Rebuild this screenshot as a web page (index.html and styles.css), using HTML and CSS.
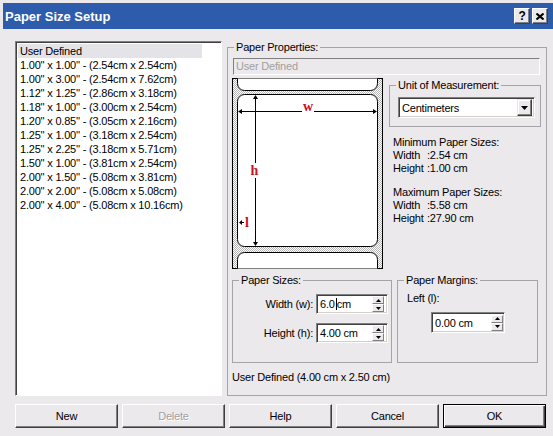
FILE: index.html
```html
<!DOCTYPE html>
<html>
<head>
<meta charset="utf-8">
<title>Paper Size Setup</title>
<link rel="stylesheet" href="styles.css">
</head>
<body>
<div class="window">
  <div class="titlebar">
    <span class="title">Paper Size Setup</span>
    <div class="tb-buttons">
      <span class="tb-btn">?</span>
      <span class="tb-btn"><svg width="8" height="7" viewBox="0 0 8 7"><path d="M0.5 0.5 L7.5 6.5 M7.5 0.5 L0.5 6.5" stroke="#000" stroke-width="2"/></svg></span>
    </div>
  </div>
  <div class="content">
    <div class="main">
      <div class="listbox">
        <div class="item selected">User Defined</div>
        <div class="item">1.00'' x 1.00'' - (2.54cm x 2.54cm)</div>
        <div class="item">1.00'' x 3.00'' - (2.54cm x 7.62cm)</div>
        <div class="item">1.12'' x 1.25'' - (2.86cm x 3.18cm)</div>
        <div class="item">1.18'' x 1.00'' - (3.00cm x 2.54cm)</div>
        <div class="item">1.20'' x 0.85'' - (3.05cm x 2.16cm)</div>
        <div class="item">1.25'' x 1.00'' - (3.18cm x 2.54cm)</div>
        <div class="item">1.25'' x 2.25'' - (3.18cm x 5.71cm)</div>
        <div class="item">1.50'' x 1.00'' - (3.81cm x 2.54cm)</div>
        <div class="item">2.00'' x 1.50'' - (5.08cm x 3.81cm)</div>
        <div class="item">2.00'' x 2.00'' - (5.08cm x 5.08cm)</div>
        <div class="item">2.00'' x 4.00'' - (5.08cm x 10.16cm)</div>
      </div>
      <fieldset class="group props">
        <legend>Paper Properties:</legend>
        <div class="props-body">
          <div class="textbox">User Defined</div>
          <div class="props-row">
            <svg class="preview" width="151" height="191" viewBox="0 0 151 191">
              <defs>
                <pattern id="dither" width="2" height="2" patternUnits="userSpaceOnUse">
                  <rect width="2" height="2" fill="#ffffff"/>
                  <rect width="1" height="1" fill="#b4b4b4"/>
                  <rect x="1" y="1" width="1" height="1" fill="#b4b4b4"/>
                </pattern>
              </defs>
              <rect x="0.5" y="0.5" width="150" height="190" fill="url(#dither)" stroke="#000"/>
              <path d="M5.5 0.5 V5.5 A7 7 0 0 0 12.5 12.5 H138.5 A7 7 0 0 0 145.5 5.5 V0.5" fill="#fff" stroke="#000"/>
              <rect x="5.5" y="16.5" width="140" height="152" rx="7" ry="7" fill="#fff" stroke="#000"/>
              <path d="M5.5 190.5 V181.5 A7 7 0 0 1 12.5 174.5 H138.5 A7 7 0 0 1 145.5 181.5 V190.5" fill="#fff" stroke="#000"/>
              <path d="M7 33.5 H70 M82 33.5 H144" stroke="#000"/>
              <path d="M6 33.5 L10 31 L10 36 Z M145 33.5 L141 31 L141 36 Z" fill="#000"/>
              <text x="76" y="33" class="dim" text-anchor="middle">w</text>
              <path d="M23.5 18 V85 M23.5 100 V167" stroke="#000"/>
              <path d="M23.5 17 L21 21 L26 21 Z M23.5 168 L21 164 L26 164 Z" fill="#000"/>
              <text x="22.5" y="97" class="dim" text-anchor="middle">h</text>
              <path d="M8 144.5 H12" stroke="#000"/>
              <path d="M7 144.5 L10 142 L10 147 Z" fill="#000"/>
              <text x="13" y="149" class="dim">l</text>
            </svg>
            <div class="side">
              <fieldset class="group unit">
                <legend>Unit of Measurement:</legend>
                <div class="combo">
                  <span class="combo-text">Centimeters</span>
                  <span class="combo-btn"><svg width="7" height="4" viewBox="0 0 7 4"><path d="M0 0 H7 L3.5 4 Z" fill="#000"/></svg></span>
                </div>
              </fieldset>
              <div class="limits first">
                <div>Minimum Paper Sizes:</div>
                <div><span class="lbl">Width</span>:2.54 cm</div>
                <div><span class="lbl">Height</span>:1.00 cm</div>
              </div>
              <div class="limits second">
                <div>Maximum Paper Sizes:</div>
                <div><span class="lbl">Width</span>:5.58 cm</div>
                <div><span class="lbl">Height</span>:27.90 cm</div>
              </div>
            </div>
          </div>
          <div class="bottom-row">
            <fieldset class="group sizes">
              <legend>Paper Sizes:</legend>
              <div class="sizes-grid">
                <span class="flabel">Width (w):</span>
                <div class="field"><span class="val">6.0</span><span class="caret"></span><span class="val">cm</span>
                  <span class="spin"><span class="sb"><svg width="5" height="3" viewBox="0 0 5 3"><path d="M2.5 0 L5 3 H0 Z" fill="#000"/></svg></span><span class="sb"><svg width="5" height="3" viewBox="0 0 5 3"><path d="M0 0 H5 L2.5 3 Z" fill="#000"/></svg></span></span>
                </div>
                <span class="flabel">Height (h):</span>
                <div class="field"><span class="val">4.00 cm</span>
                  <span class="spin"><span class="sb"><svg width="5" height="3" viewBox="0 0 5 3"><path d="M2.5 0 L5 3 H0 Z" fill="#000"/></svg></span><span class="sb"><svg width="5" height="3" viewBox="0 0 5 3"><path d="M0 0 H5 L2.5 3 Z" fill="#000"/></svg></span></span>
                </div>
              </div>
            </fieldset>
            <fieldset class="group margins">
              <legend>Paper Margins:</legend>
              <div class="margins-body">
                <div class="mlabel">Left (l):</div>
                <div class="field mfield"><span class="val">0.00 cm</span>
                  <span class="spin"><span class="sb"><svg width="5" height="3" viewBox="0 0 5 3"><path d="M2.5 0 L5 3 H0 Z" fill="#000"/></svg></span><span class="sb"><svg width="5" height="3" viewBox="0 0 5 3"><path d="M0 0 H5 L2.5 3 Z" fill="#000"/></svg></span></span>
                </div>
              </div>
            </fieldset>
          </div>
          <div class="summary">User Defined (4.00 cm x 2.50 cm)</div>
        </div>
      </fieldset>
    </div>
    <div class="buttons">
      <button class="btn">New</button>
      <button class="btn disabled">Delete</button>
      <button class="btn">Help</button>
      <button class="btn">Cancel</button>
      <button class="btn default">OK</button>
    </div>
  </div>
</div>
</body>
</html>
```
FILE: styles.css
```css
* { box-sizing: border-box; }
html, body { margin: 0; padding: 0; }
body {
  width: 553px;
  height: 436px;
  overflow: hidden;
  background: #ece9ec;
  font-family: "Liberation Sans", Arial, sans-serif;
  font-size: 11px;
  letter-spacing: -0.2px;
  color: #000;
}
.window { padding: 3px 0 0 3px; height: 436px; }
.titlebar {
  height: 26px;
  background: #2c5cab;
  display: flex;
  align-items: center;
  justify-content: space-between;
  padding: 0 5px 0 2px;
}
.title { color: #fff; font-weight: bold; font-size: 13px; letter-spacing: 0; }
.tb-buttons { display: flex; gap: 2px; }
.tb-btn {
  width: 16px; height: 16px;
  background: #ece9ec;
  border: 1px solid;
  border-color: #fff #404040 #404040 #fff;
  box-shadow: inset -1px -1px #808080;
  display: flex; align-items: center; justify-content: center;
  font-weight: bold; font-size: 12px; line-height: 12px;
}
.content { padding: 12px 0 0 12px; }
.main { display: flex; gap: 5px; height: 355px; }
.listbox {
  width: 207px; height: 355px;
  background: #fff;
  border: 1px solid;
  border-color: #808080 #fff #fff #808080;
  box-shadow: inset 1px 1px #404040;
  padding: 2px 0 0 2px;
}
.item { height: 14px; line-height: 14px; padding-left: 2px; white-space: nowrap; width: 184px; }
.item.selected { background: #e4e4e8; }

fieldset.group { margin: 0; padding: 0; border: 1px solid #a5a3a7; min-width: 0; }
fieldset.group > legend { margin-left: 6px; padding: 0 2px; line-height: 13px; height: 13px; }
.props { width: 320px; height: 355px; }
.props-body { padding: 4px 5px 0 4px; }
.textbox {
  margin-left: 1px;
  width: 307px; height: 17px;
  border: 1px solid;
  border-color: #808080 #fff #fff #808080;
  color: #a0a0a0;
  line-height: 15px;
  padding-left: 2px;
}
.props-row { display: flex; gap: 6px; margin-top: 3px; }
.preview { display: block; flex: none; }
.dim { font-family: "Liberation Serif", "Times New Roman", serif; font-weight: bold; font-size: 14px; fill: #cc1122; letter-spacing: 0; }
.side { width: 152px; padding-top: 1px; }
.unit { width: 152px; height: 48px; }
.unit .combo { margin: 5px 0 0 8px; }
.combo {
  width: 137px; height: 21px;
  background: #fff;
  border: 1px solid;
  border-color: #808080 #fff #fff #808080;
  box-shadow: inset 1px 1px #404040, inset -1px -1px #d4d0c8;
  display: flex; align-items: center;
  padding: 0 2px 0 2px;
}
.combo-text { padding-left: 1px; }
.combo-btn {
  margin-left: auto;
  width: 15px; height: 17px;
  background: #ece9ec;
  border: 1px solid;
  border-color: #e8e8e8 #404040 #404040 #e8e8e8;
  box-shadow: inset -1px -1px #808080, inset 1px 1px #fff;
  display: flex; align-items: center; justify-content: center;
}
.limits { padding-left: 4px; line-height: 13px; }
.limits.first { margin-top: 9px; }
.limits.second { margin-top: 11px; }
.lbl { display: inline-block; width: 34px; }
.bottom-row { display: flex; gap: 5px; margin-top: 5px; }
.sizes { width: 160px; height: 89px; }
.margins { width: 141px; height: 89px; }
.sizes-grid {
  display: grid;
  grid-template-columns: 1fr 72px;
  column-gap: 3px;
  row-gap: 9px;
  padding: 7px 3px 0 0;
}
.flabel { text-align: right; line-height: 20px; }
.field {
  display: flex; align-items: center;
  height: 20px;
  background: #fff;
  border: 1px solid;
  border-color: #808080 #fff #fff #808080;
  box-shadow: inset 1px 1px #404040, inset -1px -1px #d4d0c8;
  padding-left: 3px;
}
.caret { display: inline-block; width: 1px; height: 12px; background: #000; margin: 0 0 0 1px; }
.spin {
  margin-left: auto;
  margin-right: 3px;
  width: 12px; height: 16px;
  display: flex; flex-direction: column;
}
.sb {
  flex: 1;
  background: #ece9ec;
  border: 1px solid;
  border-color: #fff #808080 #808080 #fff;
  display: flex; align-items: center; justify-content: center;
}
.margins-body { padding: 5px 0 0 9px; }
.mlabel { line-height: 13px; }
.mfield { width: 74px; height: 21px; margin: 7px 0 0 24px; }
.mfield .spin { margin-right: 1px; }
.summary { margin-top: 8px; line-height: 13px; }
.buttons {
  display: grid;
  grid-template-columns: repeat(5, 103px);
  column-gap: 4px;
  margin-top: 8px;
}
.btn {
  height: 24px;
  font-family: "Liberation Sans", Arial, sans-serif;
  font-size: 11px;
  letter-spacing: -0.2px;
  color: #000;
  background: #ece9ec;
  border: 1px solid;
  border-color: #fff #404040 #404040 #fff;
  box-shadow: inset -1px -1px #808080;
  padding: 0;
}
.btn.disabled { color: #a0a0a0; text-shadow: 1px 1px #fff; }
.btn.default {
  border: 1px solid #000;
  box-shadow: inset 1px 1px #fff, inset -1px -1px #404040, inset -2px -2px #808080;
}
```
